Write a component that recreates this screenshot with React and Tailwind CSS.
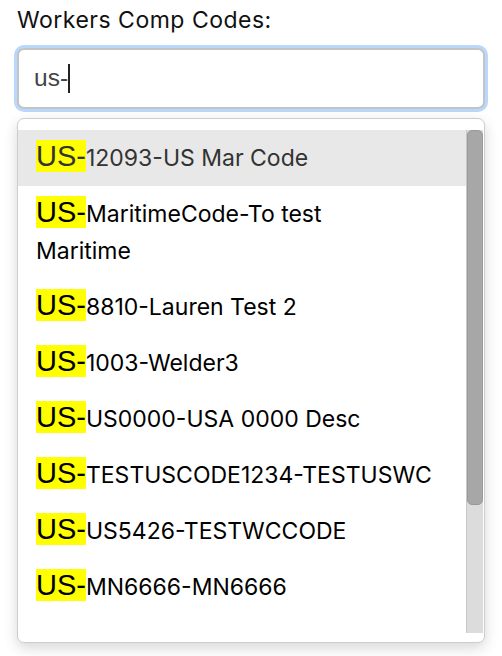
import React from "react";

// each entry is the code's lines after the highlighted "US-" prefix
const codes = [
  ["12093-US Mar Code"],
  ["MaritimeCode-To test", "Maritime"],
  ["8810-Lauren Test 2"],
  ["1003-Welder3"],
  ["US0000-USA 0000 Desc"],
  ["TESTUSCODE1234-TESTUSWC"],
  ["US5426-TESTWCCODE"],
  ["MN6666-MN6666"],
];

const App = () => {
  return (
    <div className="w-[502px] h-[656px] bg-white px-4 pt-[6px] font-['Inter',sans-serif]">
      {/* label */}
      <label className="block pl-[1px] text-[23px] tracking-[0.5px] leading-[28px] text-[#111]">
        Workers Comp Codes:
      </label>

      {/* search box, focused */}
      <div className="mt-[14px] mx-[1px] h-[61px] flex items-center pl-[15px] rounded-[7px] border-2 border-[#c4c4c4] bg-white shadow-[0_0_0_3px_#b9d8fb]">
        <span className="font-['Liberation_Sans',sans-serif] text-[24.5px] text-[#444]">us-</span>
        <span className="w-[2px] h-[29px] bg-[#222]" />
      </div>

      {/* results */}
      <div className="mt-[9px] mx-[1px] flex pt-[11px] pb-[9px] pr-[1px] rounded-[7px] border border-[#cdcdcd] bg-white shadow-[0_5px_14px_rgba(0,0,0,0.16)]">
        <ul className="flex-1 h-[503px] overflow-hidden">
          {codes.map((lines, i) => (
            <li
              key={lines[0]}
              className={
                i === 0
                  ? "pl-[18px] pr-[18px] py-[9.5px] text-[23px] leading-[37px] bg-[#e8e8e8] text-[#333]"
                  : "pl-[18px] pr-[18px] py-[9.5px] text-[23px] leading-[37px] text-black"
              }
            >
              <mark className="bg-[#ffff00] text-inherit font-['Liberation_Sans',sans-serif] text-[29px] leading-[32px]">US-</mark>
              <span>{lines[0]}</span>
              {lines.slice(1).map((l) => (
                <span key={l} className="block">{l}</span>
              ))}
            </li>
          ))}
        </ul>
        <div className="w-[17px] bg-[#dcdcdc] border-l border-[#c8c8c8]">
          <div className="h-[375px] rounded-[5px] border border-[#9a9a9a] bg-[#a7a7a7]" />
        </div>
      </div>
    </div>
  );
};

export default App;
